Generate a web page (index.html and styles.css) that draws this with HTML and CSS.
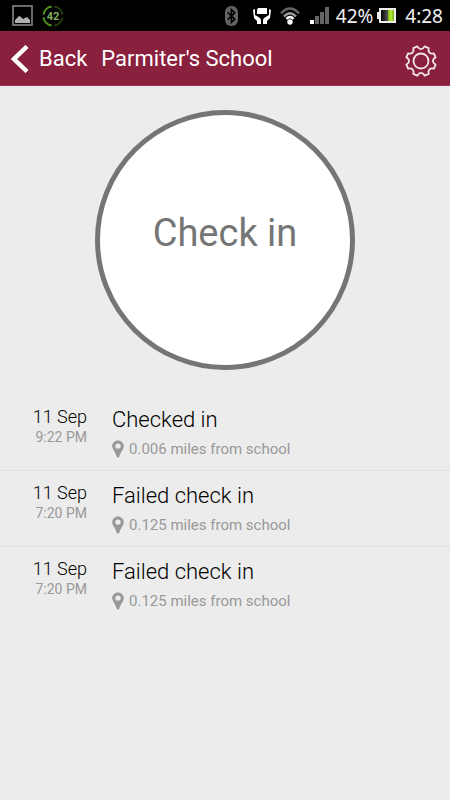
FILE: index.html
```html
<!DOCTYPE html>
<html lang="en">
<head>
<meta charset="utf-8">
<meta name="viewport" content="width=device-width, initial-scale=1">
<title>Parmiter's School</title>
<link rel="stylesheet" href="styles.css">
</head>
<body>
<svg width="0" height="0" class="defs" aria-hidden="true">
  <symbol id="pin" viewBox="0 0 12 18"><path fill-rule="evenodd" d="M6 0.5C2.700 0.500 0.200 3 0.200 6.100C0.200 9.500 3.200 11.500 4.600 16.600Q6 18.800 7.400 16.600C8.800 11.500 11.800 9.500 11.800 6.100C11.800 3 9.300 0.500 6 0.500ZM6 3.400A2.700 2.700 0 1 1 6 8.800A2.700 2.700 0 1 1 6 3.400Z"/></symbol>
</svg>
<div class="status">
  <svg class="icon-photo" width="21" height="21" viewBox="0 0 21 21"><rect x="1" y="1" width="19" height="19" fill="none" stroke="#858585" stroke-width="1.600"/><path d="M3 18V15L5 13L7 11L9 12L11 14L13 13L15 12L18 15V18Z" fill="#b0b0b0"/></svg>
  <svg class="icon-level" width="22" height="22" viewBox="0 0 22 22"><g fill="none" stroke-width="2"><path d="M1.500 9.600A9.600 9.600 0 0 1 9.600 1.500M9.600 20.500A9.600 9.600 0 0 1 1.500 12.400" stroke="#57991f"/><path d="M12.400 1.500A9.600 9.600 0 0 1 20.500 9.600M20.500 12.400A9.600 9.600 0 0 1 12.400 20.500" stroke="#24400f"/></g><text x="11" y="15" text-anchor="middle" class="level-text">42</text></svg>
  <span class="spacer"></span>
  <svg class="icon-bt" width="13" height="20" viewBox="0 0 13 20"><rect width="13" height="20" rx="6" fill="#626262"/><path d="M2.700 6.200L9.700 13.200L6.400 16.400V3.600L9.700 6.800L2.700 13.800" fill="none" stroke="#000" stroke-width="1.600"/></svg>
  <svg class="icon-hands" width="18" height="18" viewBox="0 0 18 18" fill="#fff"><path d="M5 1H14V7H4V3Z"/><path d="M0 3L2 2V8L7 11L8 13V17H4V14L1 11ZM18 3L16 2V8L11 11L10 13V17H14V14L17 11Z"/></svg>
  <svg class="icon-wifi" width="20" height="18" viewBox="0 0 20 18"><g fill="none" stroke-width="2.500"><path d="M1 6.500Q10-3.500 19 6.500" stroke="#646464"/><path d="M4 9.500Q10 3 16 9.500" stroke="#999"/><path d="M6.500 12Q10 8 13.500 12" stroke="#fff"/></g><circle cx="10" cy="15" r="2.700" fill="#fff"/></svg>
  <svg class="icon-signal" width="20" height="19" viewBox="0 0 20 19" fill="#646464"><path d="M0 14H4V18H0Z" fill="#fff"/><path d="M5 10H9V18H5ZM10 6H14V18H10ZM15 1H19V18H15Z"/></svg>
  <span class="status-text">42%</span>
  <svg class="icon-battery" width="19" height="15" viewBox="0 0 19 15"><defs><linearGradient id="cell"><stop offset="0" stop-color="#000"/><stop offset="1" stop-color="#555"/></linearGradient><linearGradient id="charge"><stop offset="0" stop-color="#76b80c"/><stop offset=".5" stop-color="#b7ed35"/><stop offset="1" stop-color="#73a715"/></linearGradient></defs><path d="M2 0H19V15H2V11H0V4H2Z" fill="#eee"/><rect x="4" y="2" width="7" height="11" fill="url(#cell)"/><rect x="11" y="2" width="6" height="11" fill="url(#charge)"/></svg>
  <span class="status-text">4:28</span>
</div>
<header class="bar">
  <a class="back" href="#"><svg width="18" height="28" viewBox="0 0 18 28"><path d="M16 1.500L3 14L16 26.500" fill="none" stroke="#fff" stroke-width="4.500"/></svg>Back</a>
  <h1>Parmiter's School</h1>
  <button class="settings" type="button" aria-label="Settings"><svg width="32" height="32" viewBox="0 0 32 32" fill="none" stroke="#f3e6ea" stroke-width="1.800" stroke-linejoin="round"><path d="M12.400 1.400C14.300 5 17.700 5 19.600 1.400L23.700 3.100C22.600 7 25 9.400 28.900 8.300L30.600 12.400C27 14.300 27 17.700 30.600 19.600L28.900 23.700C25 22.600 22.600 25 23.700 28.900L19.600 30.600C17.700 27 14.300 27 12.400 30.600L8.300 28.900C9.400 25 7 22.600 3.100 23.700L1.400 19.600C5 17.700 5 14.300 1.400 12.400L3.100 8.300C7 9.400 9.400 7 8.300 3.100Z"/><circle cx="16" cy="16" r="7.500"/></svg></button>
</header>
<main>
  <button class="check" type="button">Check in</button>
  <ul class="log">
    <li>
      <div class="when"><span class="day">11 Sep</span><span class="time">9:22 PM</span></div>
      <div class="what"><h2>Checked in</h2><p><svg width="12" height="18"><use href="#pin"/></svg>0.006 miles from school</p></div>
    </li>
    <li>
      <div class="when"><span class="day">11 Sep</span><span class="time">7:20 PM</span></div>
      <div class="what"><h2>Failed check in</h2><p><svg width="12" height="18"><use href="#pin"/></svg>0.125 miles from school</p></div>
    </li>
    <li>
      <div class="when"><span class="day">11 Sep</span><span class="time">7:20 PM</span></div>
      <div class="what"><h2>Failed check in</h2><p><svg width="12" height="18"><use href="#pin"/></svg>0.125 miles from school</p></div>
    </li>
  </ul>
</main>
</body>
</html>
```
FILE: styles.css
```css
* { box-sizing: border-box; }
body {
  margin: 0;
  background: #ececec;
  color: #111;
  font-family: Roboto, "Liberation Sans", sans-serif;
}
svg { display: block; flex: none; }
.defs { position: absolute; }
h1, h2, p, ul { margin: 0; padding: 0; font-weight: 400; }
button { border: 0; padding: 0; background: none; font: inherit; cursor: pointer; }

.status {
  display: flex;
  align-items: center;
  height: 31px;
  padding: 0 7px 0 12px;
  background: #000;
  color: #f2f2f2;
}
.icon-level { margin-left: 9px; }
.level-text { font: 700 11px Roboto, sans-serif; fill: #82ae62; }
.spacer { flex: 1; }
.icon-hands { margin-left: 15px; }
.icon-wifi { margin-left: 9px; }
.icon-signal { margin: 0 6px 0 10px; }
.icon-battery { margin: 0 9px 0 4px; }
.status-text { font: 19px/30px "Noto Sans", sans-serif; }

.bar {
  display: flex;
  align-items: center;
  height: 55px;
  padding: 1px 13px 0 11px;
  background: #89203e;
  border-bottom: 1px solid #a0305a;
  color: #fff;
  font-size: 22px;
}
.back { display: flex; align-items: center; gap: 10px; color: inherit; text-decoration: none; }
.bar h1 { flex: 1; margin-left: 14px; font-size: 22px; }
.settings { margin-top: 4px; }

.check {
  display: block;
  width: 260px;
  height: 260px;
  margin: 24px auto 25px;
  padding-bottom: 15px;
  border: 5px solid #757575;
  border-radius: 50%;
  background: #fff;
  color: #757575;
  font-size: 38px;
}

.log { list-style: none; }
.log li {
  display: flex;
  gap: 25px;
  height: 76px;
  padding-top: 11px;
  border-bottom: 1px solid #e2e2e2;
}
.log li:last-child { border-bottom: 0; }
.when { width: 87px; text-align: right; }
.day { display: block; font-size: 18px; font-weight: 300; line-height: 22px; color: #000; }
.time { display: block; font-size: 14px; line-height: 18px; color: #999; }
.what h2 { font-size: 22px; font-weight: 300; line-height: 28px; color: #000; }
.what p {
  display: flex;
  align-items: center;
  gap: 5px;
  margin-top: 6px;
  font-size: 15px;
  line-height: 18px;
  color: #999;
}
.what svg { fill: #999; }
```
